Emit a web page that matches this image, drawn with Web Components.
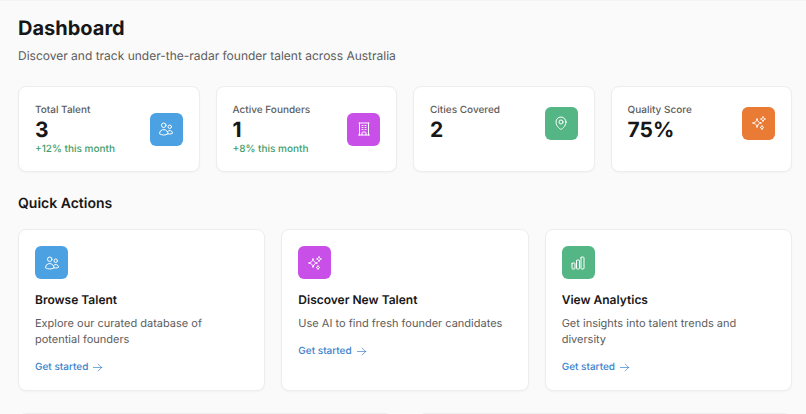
<!DOCTYPE html>
<html lang="en">
<head>
<meta charset="utf-8">
<title>Dashboard</title>
<style>
  html, body { height: 100%; margin: 0; }
  body { background: #fafafa; color: #171717; font-family: Inter, "Liberation Sans", sans-serif; text-rendering: geometricPrecision; overflow: hidden; }
</style>
</head>
<body>
<talent-dashboard></talent-dashboard>

<template id="dashboard-template">
  <style>
    :host { display: block; box-sizing: border-box; height: 100vh; overflow: hidden; border-top: 1px solid #f3f3f3; padding: 14px 14px 0 18px; }
    h1 { margin: 0; font-size: 20px; line-height: 26px; font-weight: 700; }
    .lead { margin: 5px 0 0; font-size: 12px; line-height: 20px; color: #5c5c5c; }
    .grid { display: grid; gap: 16px; }
    .stats { grid-template-columns: repeat(4, minmax(0, 1fr)); margin-top: 20px; }
    h2 { margin: 22px 0 15px; font-size: 14px; line-height: 20px; font-weight: 600; }
    .actions { grid-template-columns: repeat(3, minmax(0, 1fr)); }
    .panels { grid-template-columns: repeat(2, minmax(0, 1fr)); column-gap: 24px; margin-top: 22px; }
  </style>
  <header>
    <h1>Dashboard</h1>
    <p class="lead">Discover and track under-the-radar founder talent across Australia</p>
  </header>
  <section class="grid stats" aria-label="Statistics">
    <stat-card icon="users" tone="blue"><span slot="label">Total Talent</span><span slot="value">3</span><span slot="change">+12% this month</span></stat-card>
    <stat-card icon="building" tone="purple"><span slot="label">Active Founders</span><span slot="value">1</span><span slot="change">+8% this month</span></stat-card>
    <stat-card icon="pin" tone="green"><span slot="label">Cities Covered</span><span slot="value">2</span></stat-card>
    <stat-card icon="sparkles" tone="orange"><span slot="label">Quality Score</span><span slot="value">75%</span></stat-card>
  </section>
  <section>
    <h2>Quick Actions</h2>
    <div class="grid actions">
      <action-card icon="users" tone="blue" href="#talent"><span slot="title">Browse Talent</span>Explore our curated database of potential founders</action-card>
      <action-card icon="sparkles" tone="purple" href="#discover"><span slot="title">Discover New Talent</span>Use AI to find fresh founder candidates</action-card>
      <action-card icon="chart" tone="green" href="#analytics"><span slot="title">View Analytics</span>Get insights into talent trends and diversity</action-card>
    </div>
  </section>
  <section class="grid panels">
    <surface-card></surface-card>
    <surface-card></surface-card>
  </section>
</template>

<template id="surface-template">
  <style>
    :host { display: block; box-sizing: border-box; min-height: 64px; padding: 16px; background: #fff; border: 1px solid #ededed; border-radius: 8px; box-shadow: 0 1px 2px rgba(0, 0, 0, .03); }
  </style>
  <slot></slot>
</template>

<template id="stat-template">
  <style>
    :host { display: grid; }
    .row { display: flex; align-items: center; justify-content: space-between; }
    .label { font-size: 10px; line-height: 15px; font-weight: 500; color: #5c5c5c; }
    .value { font-size: 21px; line-height: 25px; font-weight: 700; }
    .change { font-size: 10px; line-height: 12px; font-weight: 500; color: #3f9d69; }
  </style>
  <surface-card>
    <div class="row">
      <div>
        <div class="label"><slot name="label"></slot></div>
        <div class="value"><slot name="value"></slot></div>
        <div class="change"><slot name="change"></slot></div>
      </div>
      <icon-tile></icon-tile>
    </div>
  </surface-card>
</template>

<template id="action-template">
  <style>
    :host { display: grid; }
    h3 { margin: 12px 0 6px; font-size: 12px; line-height: 18px; font-weight: 600; }
    p { margin: 0; font-size: 11px; line-height: 16px; color: #5c5c5c; }
    a { display: inline-flex; align-items: center; gap: 4px; margin-top: 13px; font-size: 10px; line-height: 14px; font-weight: 500; color: #3a82cb; text-decoration: none; vertical-align: top; }
    a:hover { text-decoration: underline; }
  </style>
  <surface-card>
    <icon-tile></icon-tile>
    <h3><slot name="title"></slot></h3>
    <p><slot></slot></p>
    <a>Get started <line-icon name="arrow" style="--size: 11px"></line-icon></a>
  </surface-card>
</template>

<template id="tile-template">
  <style>
    :host { display: grid; place-items: center; flex: none; width: 33px; height: 33px; border-radius: 6px; color: #fff; background: #4ba1e2; }
    :host([tone="purple"]) { background: #c84fe7; }
    :host([tone="green"]) { background: #55b685; }
    :host([tone="orange"]) { background: #e97b35; }
  </style>
  <line-icon></line-icon>
</template>

<script>
  const ICONS = {
    users: "M15 19.128a9.38 9.38 0 0 0 2.625.372 9.337 9.337 0 0 0 4.121-.952 4.125 4.125 0 0 0-7.533-2.493M15 19.128v-.003c0-1.113-.285-2.16-.786-3.07M15 19.128v.106A12.318 12.318 0 0 1 8.624 21c-2.331 0-4.512-.645-6.374-1.766l-.001-.109a6.375 6.375 0 0 1 11.964-3.07M12 6.375a3.375 3.375 0 1 1-6.75 0 3.375 3.375 0 0 1 6.75 0Zm8.25 2.25a2.625 2.625 0 1 1-5.25 0 2.625 2.625 0 0 1 5.25 0Z",
    building: "M3.75 21h16.5M4.5 3h15M5.25 3v18m13.5-18v18M9 6.75h1.5m-1.5 3h1.5m-1.5 3h1.5m3-6H15m-1.5 3H15m-1.5 3H15M9 21v-3.375c0-.621.504-1.125 1.125-1.125h3.75c.621 0 1.125.504 1.125 1.125V21",
    pin: "M15 10.5a3 3 0 1 1-6 0 3 3 0 0 1 6 0ZM19.5 10.5c0 7.142-7.5 11.25-7.5 11.25S4.5 17.642 4.5 10.5a7.5 7.5 0 1 1 15 0Z",
    sparkles: "M9.813 15.904 9 18.75l-.813-2.846a4.5 4.5 0 0 0-3.09-3.09L2.25 12l2.846-.813a4.5 4.5 0 0 0 3.09-3.09L9 5.25l.813 2.846a4.5 4.5 0 0 0 3.09 3.09L15.75 12l-2.846.813a4.5 4.5 0 0 0-3.09 3.09ZM18.259 8.715 18 9.75l-.259-1.035a3.375 3.375 0 0 0-2.455-2.456L14.25 6l1.036-.259a3.375 3.375 0 0 0 2.455-2.456L18 2.25l.259 1.035a3.375 3.375 0 0 0 2.456 2.456L21.75 6l-1.035.259a3.375 3.375 0 0 0-2.456 2.456ZM16.894 20.567 16.5 21.75l-.394-1.183a2.25 2.25 0 0 0-1.423-1.423L13.5 18.75l1.183-.394a2.25 2.25 0 0 0 1.423-1.423l.394-1.183.394 1.183a2.25 2.25 0 0 0 1.423 1.423l1.183.394-1.183.394a2.25 2.25 0 0 0-1.423 1.423Z",
    chart: "M3 13.125C3 12.504 3.504 12 4.125 12h2.25c.621 0 1.125.504 1.125 1.125v6.75C7.5 20.496 6.996 21 6.375 21h-2.25A1.125 1.125 0 0 1 3 19.875v-6.75ZM9.75 8.625c0-.621.504-1.125 1.125-1.125h2.25c.621 0 1.125.504 1.125 1.125v11.25c0 .621-.504 1.125-1.125 1.125h-2.25a1.125 1.125 0 0 1-1.125-1.125V8.625ZM16.5 4.125c0-.621.504-1.125 1.125-1.125h2.25C20.496 3 21 3.504 21 4.125v15.75c0 .621-.504 1.125-1.125 1.125h-2.25a1.125 1.125 0 0 1-1.125-1.125V4.125Z",
    arrow: "M13.5 4.5 21 12m0 0-7.5 7.5M21 12H3"
  };

  class TemplateElement extends HTMLElement {
    constructor() {
      super();
      this.attachShadow({ mode: "open" }).append(
        document.getElementById(this.constructor.template).content.cloneNode(true));
    }
    find(selector) { return this.shadowRoot.querySelector(selector); }
  }

  customElements.define("line-icon", class extends HTMLElement {
    static observedAttributes = ["name"];
    constructor() {
      super();
      this.attachShadow({ mode: "open" }).innerHTML = `
        <style>
          :host { display: block; width: var(--size, 16px); height: var(--size, 16px); }
          svg { display: block; width: 100%; height: 100%; fill: none; stroke: currentColor; stroke-width: 1.5; stroke-linecap: round; stroke-linejoin: round; }
        </style>
        <svg viewBox="0 0 24 24" aria-hidden="true"><path/></svg>`;
    }
    attributeChangedCallback(attribute, previous, name) {
      this.shadowRoot.querySelector("path").setAttribute("d", ICONS[name] || "");
    }
  });

  customElements.define("surface-card", class extends TemplateElement {
    static template = "surface-template";
  });

  customElements.define("icon-tile", class extends TemplateElement {
    static template = "tile-template";
    static observedAttributes = ["icon"];
    attributeChangedCallback(attribute, previous, name) {
      this.find("line-icon").setAttribute("name", name);
    }
  });

  class TiledCard extends TemplateElement {
    connectedCallback() {
      const tile = this.find("icon-tile");
      tile.setAttribute("icon", this.getAttribute("icon"));
      tile.setAttribute("tone", this.getAttribute("tone"));
    }
  }

  customElements.define("stat-card", class extends TiledCard {
    static template = "stat-template";
    connectedCallback() {
      super.connectedCallback();
      this.find(".change").hidden = !this.querySelector('[slot="change"]');
    }
  });

  customElements.define("action-card", class extends TiledCard {
    static template = "action-template";
    connectedCallback() {
      super.connectedCallback();
      this.find("a").href = this.getAttribute("href");
    }
  });

  customElements.define("talent-dashboard", class extends TemplateElement {
    static template = "dashboard-template";
  });
</script>
</body>
</html>
